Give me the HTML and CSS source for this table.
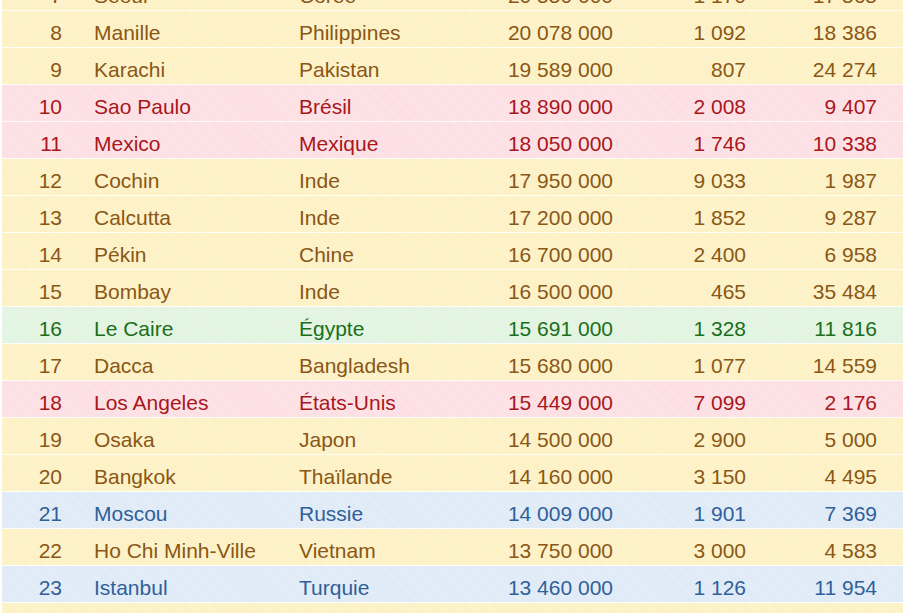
FILE: index.html
```html
<!DOCTYPE html>
<html lang="fr">
<head>
<meta charset="utf-8">
<title>Villes les plus peuplées</title>
<link rel="stylesheet" href="styles.css">
</head>
<body>
<table class="cities">
  <colgroup>
    <col class="c-rank"><col class="c-city"><col class="c-country"><col class="c-pop"><col class="c-area"><col class="c-dens">
  </colgroup>
  <tbody>
    <tr class="y"><td class="num">7</td><td>Séoul</td><td>Corée</td><td class="num pop">20 550 000</td><td class="num area">1 170</td><td class="num dens">17 565</td></tr>
    <tr class="y"><td class="num">8</td><td>Manille</td><td>Philippines</td><td class="num pop">20 078 000</td><td class="num area">1 092</td><td class="num dens">18 386</td></tr>
    <tr class="y"><td class="num">9</td><td>Karachi</td><td>Pakistan</td><td class="num pop">19 589 000</td><td class="num area">807</td><td class="num dens">24 274</td></tr>
    <tr class="r"><td class="num">10</td><td>Sao Paulo</td><td>Brésil</td><td class="num pop">18 890 000</td><td class="num area">2 008</td><td class="num dens">9 407</td></tr>
    <tr class="r"><td class="num">11</td><td>Mexico</td><td>Mexique</td><td class="num pop">18 050 000</td><td class="num area">1 746</td><td class="num dens">10 338</td></tr>
    <tr class="y"><td class="num">12</td><td>Cochin</td><td>Inde</td><td class="num pop">17 950 000</td><td class="num area">9 033</td><td class="num dens">1 987</td></tr>
    <tr class="y"><td class="num">13</td><td>Calcutta</td><td>Inde</td><td class="num pop">17 200 000</td><td class="num area">1 852</td><td class="num dens">9 287</td></tr>
    <tr class="y"><td class="num">14</td><td>Pékin</td><td>Chine</td><td class="num pop">16 700 000</td><td class="num area">2 400</td><td class="num dens">6 958</td></tr>
    <tr class="y"><td class="num">15</td><td>Bombay</td><td>Inde</td><td class="num pop">16 500 000</td><td class="num area">465</td><td class="num dens">35 484</td></tr>
    <tr class="g"><td class="num">16</td><td>Le Caire</td><td>Égypte</td><td class="num pop">15 691 000</td><td class="num area">1 328</td><td class="num dens">11 816</td></tr>
    <tr class="y"><td class="num">17</td><td>Dacca</td><td>Bangladesh</td><td class="num pop">15 680 000</td><td class="num area">1 077</td><td class="num dens">14 559</td></tr>
    <tr class="r"><td class="num">18</td><td>Los Angeles</td><td>États-Unis</td><td class="num pop">15 449 000</td><td class="num area">7 099</td><td class="num dens">2 176</td></tr>
    <tr class="y"><td class="num">19</td><td>Osaka</td><td>Japon</td><td class="num pop">14 500 000</td><td class="num area">2 900</td><td class="num dens">5 000</td></tr>
    <tr class="y"><td class="num">20</td><td>Bangkok</td><td>Thaïlande</td><td class="num pop">14 160 000</td><td class="num area">3 150</td><td class="num dens">4 495</td></tr>
    <tr class="b"><td class="num">21</td><td>Moscou</td><td>Russie</td><td class="num pop">14 009 000</td><td class="num area">1 901</td><td class="num dens">7 369</td></tr>
    <tr class="y"><td class="num">22</td><td>Ho Chi Minh-Ville</td><td>Vietnam</td><td class="num pop">13 750 000</td><td class="num area">3 000</td><td class="num dens">4 583</td></tr>
    <tr class="b"><td class="num">23</td><td>Istanbul</td><td>Turquie</td><td class="num pop">13 460 000</td><td class="num area">1 126</td><td class="num dens">11 954</td></tr>
    <tr class="y"><td class="num"></td><td></td><td></td><td class="num pop"></td><td class="num area"></td><td class="num dens"></td></tr>
  </tbody>
</table>
</body>
</html>
```
FILE: styles.css
```css
html, body {
  margin: 0;
  padding: 0;
  overflow: hidden;
  background: #ffffff;
}

body {
  font-family: "Liberation Sans", Arial, Helvetica, sans-serif;
  font-size: 21px;
}

.cities {
  width: 901px;
  margin: -26px 2px 0 2px;
  border-collapse: collapse;
  table-layout: fixed;
}

.c-rank { width: 78px; }
.c-city { width: 205px; }
.c-country { width: 195px; }
.c-pop { width: 150px; }
.c-area { width: 130px; }
.c-dens { width: 143px; }

.cities td {
  height: 36px;
  box-sizing: border-box;
  padding: 8px 0 0 14px;
  line-height: 28px;
  vertical-align: top;
  white-space: nowrap;
  border-bottom: 1px solid rgba(255, 255, 255, 0.85);
}

.cities td.num {
  text-align: right;
  padding-left: 0;
}

.cities td:first-child { padding-right: 18px; }
.cities td.pop { padding-right: 17px; }
.cities td.area { padding-right: 14px; }
.cities td.dens { padding-right: 26px; }

.cities tr {
  background-image: repeating-linear-gradient(
    45deg,
    rgba(255, 255, 255, 0.22) 0 1px,
    rgba(255, 255, 255, 0) 1px 3px
  );
}

.cities tr.y { background-color: #fdf1c4; color: #8a5716; }
.cities tr.r { background-color: #fddfe3; color: #a8171c; }
.cities tr.g { background-color: #e1f4e0; color: #1a6e1c; }
.cities tr.b { background-color: #dfeaf7; color: #30609a; }
```
